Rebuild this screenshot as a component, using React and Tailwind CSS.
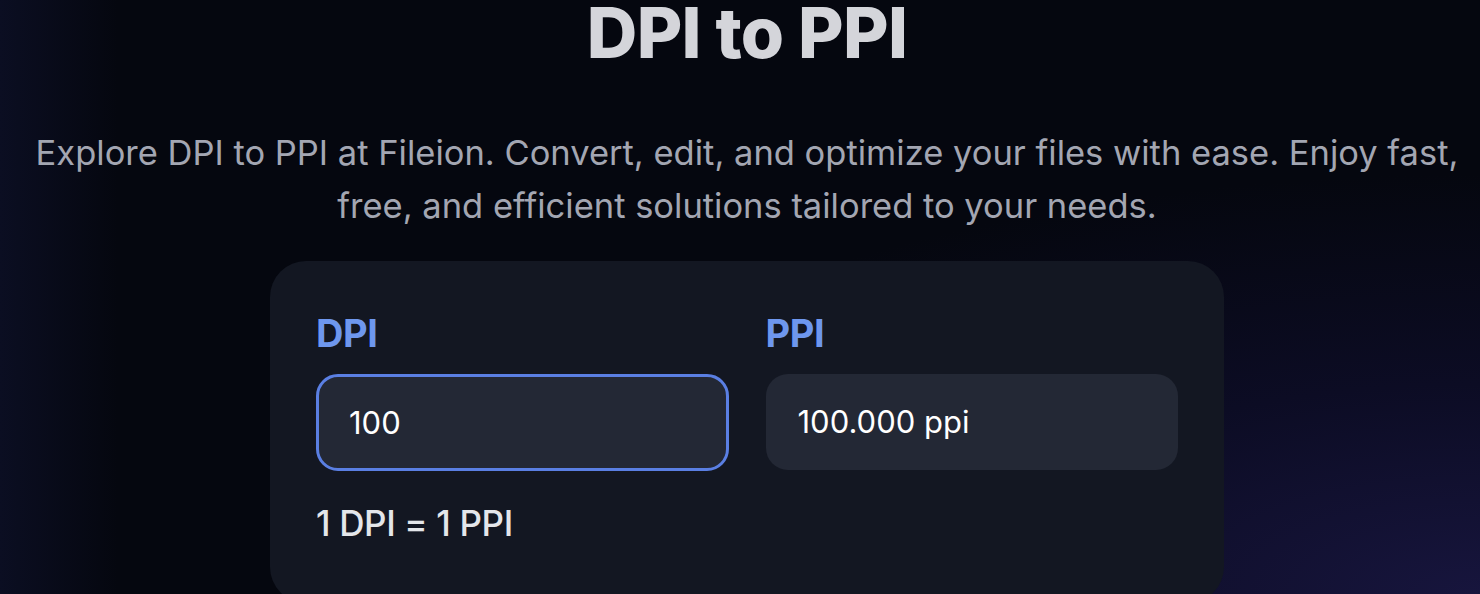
import React, { useState } from "react";

export default function App() {
  const [dpi, setDpi] = useState("100");
  const ppi = (parseFloat(dpi) || 0).toFixed(3);

  return (
    <div className="relative w-full h-[594px] overflow-hidden bg-[#05070f] font-['Inter',sans-serif]">
      {/* soft glows */}
      <div className="absolute inset-0 bg-[radial-gradient(ellipse_at_100%_100%,#17153d_0%,#0c0c24_25%,transparent_50%)]" />
      <div className="absolute inset-0 bg-[linear-gradient(90deg,#0b0e22_0%,transparent_8%)]" />

      <div className="relative flex flex-col items-center pl-[14px]">
        <h1 className="-mt-[3px] text-[70px] leading-[72px] font-extrabold tracking-[-0.01em] text-[#d4d5da]">
          DPI to PPI
        </h1>

        <p className="mt-[57px] max-w-[1450px] text-center text-[34.5px] leading-[53px] text-[#a3a6b2]">
          Explore DPI to PPI at Fileion. Convert, edit, and optimize your files with ease. Enjoy fast,
          free, and efficient solutions tailored to your needs.
        </p>

        <div className="mt-[29px] w-[954px] rounded-[36px] bg-[#131722] px-[46px] pt-[52px] pb-[60px]">
          <div className="grid grid-cols-2 gap-[37px]">
            <div>
              <label className="block text-[38px] leading-[40px] font-bold tracking-[-0.01em] text-[#6e97ee]">
                DPI
              </label>
              <input
                value={dpi}
                onChange={(e) => setDpi(e.target.value)}
                className="mt-[21px] block w-full h-[97px] rounded-[22px] border-[3px] border-[#5a7fe3] bg-[#232835] px-[30px] text-[31px] text-white outline-none"
              />
              <p className="mt-[32px] text-[35px] leading-[40px] font-medium tracking-[-0.01em] text-[#e4e6ea]">
                1 DPI = 1 PPI
              </p>
            </div>
            <div>
              <label className="block text-[38px] leading-[40px] font-bold tracking-[-0.01em] text-[#6e97ee]">
                PPI
              </label>
              <div className="mt-[21px] flex items-center h-[96px] rounded-[22px] bg-[#232835] px-[32px] text-[31px] text-white">
                {ppi} ppi
              </div>
            </div>
          </div>
        </div>
      </div>
    </div>
  );
}
